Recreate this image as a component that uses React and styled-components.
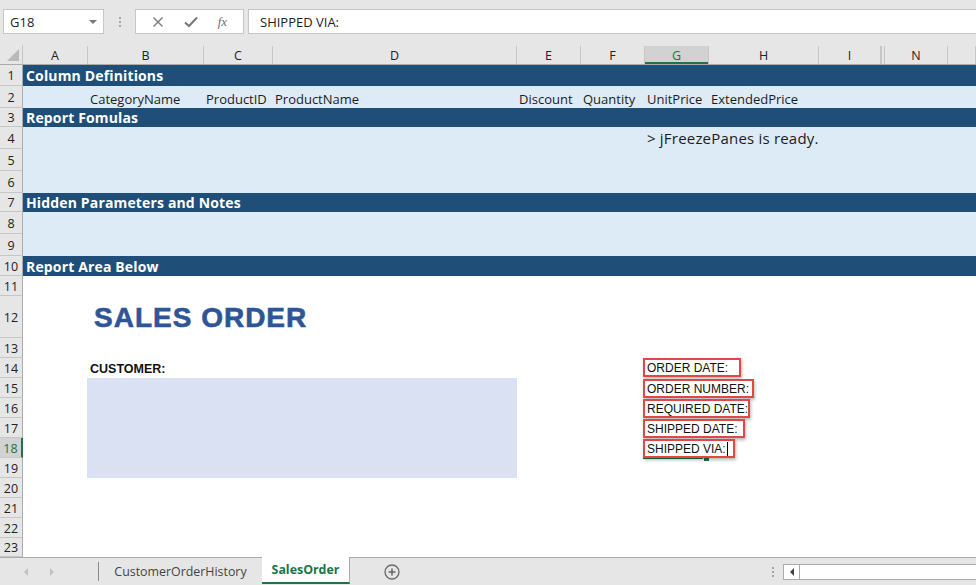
import React from "react";
import styled, { createGlobalStyle } from "styled-components";

const GlobalStyle = createGlobalStyle`
  html, body {
    margin: 0;
    padding: 0;
  }
  body {
    width: 976px;
    height: 585px;
    overflow: hidden;
    background: #ffffff;
    font-family: "Open Sans", "Liberation Sans", sans-serif;
  }
`;

const COLS = [
  { id: "A", w: 65 },
  { id: "B", w: 116 },
  { id: "C", w: 69 },
  { id: "D", w: 244 },
  { id: "E", w: 64 },
  { id: "F", w: 64 },
  { id: "G", w: 64, active: true },
  { id: "H", w: 110 },
  { id: "I", w: 62 },
  { id: "", w: 4, hidden: true },
  { id: "N", w: 63 },
  { id: "", w: 0 },
];

const TEMPLATE = COLS.map((c, i) => (i === COLS.length - 1 ? "1fr" : c.w + "px")).join(" ");

const ROWS = [
  { n: 1, h: 21, kind: "band", cells: [{ col: 1, pad: 3, text: "Column Definitions" }] },
  {
    n: 2,
    h: 22,
    kind: "light",
    cells: [
      { col: 2, pad: 2, text: "CategoryName" },
      { col: 3, pad: 2, text: "ProductID" },
      { col: 4, pad: 2, text: "ProductName" },
      { col: 5, pad: 2, text: "Discount" },
      { col: 6, pad: 2, text: "Quantity" },
      { col: 7, pad: 2, text: "UnitPrice" },
      { col: 8, pad: 2, text: "ExtendedPrice" },
    ],
  },
  { n: 3, h: 19, kind: "band", cells: [{ col: 1, pad: 3, text: "Report Fomulas" }] },
  { n: 4, h: 22, kind: "light", cells: [{ col: 7, pad: 2, text: "> jFreezePanes is ready.", variant: "note" }] },
  { n: 5, h: 22, kind: "light", cells: [] },
  { n: 6, h: 22, kind: "light", cells: [] },
  { n: 7, h: 19, kind: "band", cells: [{ col: 1, pad: 3, text: "Hidden Parameters and Notes" }] },
  { n: 8, h: 22, kind: "light", cells: [] },
  { n: 9, h: 22, kind: "light", cells: [] },
  { n: 10, h: 20, kind: "band", cells: [{ col: 1, pad: 3, text: "Report Area Below" }] },
  { n: 11, h: 20, kind: "plain", cells: [] },
  { n: 12, h: 42, kind: "plain", cells: [{ col: 2, pad: 6, text: "SALES ORDER", variant: "title" }] },
  { n: 13, h: 20, kind: "plain", cells: [] },
  {
    n: 14,
    h: 20,
    kind: "plain",
    cells: [
      { col: 2, pad: 2, text: "CUSTOMER:", variant: "label" },
      { col: 7, field: "ORDER DATE:", w: 98 },
    ],
  },
  { n: 15, h: 20, kind: "plain", fill: true, cells: [{ col: 7, field: "ORDER NUMBER:", w: 111, top: 1 }] },
  { n: 16, h: 20, kind: "plain", fill: true, cells: [{ col: 7, field: "REQUIRED DATE:", w: 107, top: 1 }] },
  { n: 17, h: 20, kind: "plain", fill: true, cells: [{ col: 7, field: "SHIPPED DATE:", w: 102, top: 1 }] },
  {
    n: 18,
    h: 20,
    kind: "plain",
    fill: true,
    active: true,
    cells: [{ col: 7, field: "SHIPPED VIA:", w: 92, top: 1, selected: true }],
  },
  { n: 19, h: 20, kind: "plain", fill: true, cells: [] },
  { n: 20, h: 20, kind: "plain", cells: [] },
  { n: 21, h: 20, kind: "plain", cells: [] },
  { n: 22, h: 20, kind: "plain", cells: [] },
  { n: 23, h: 19, kind: "plain", cells: [] },
];

/* ---------- formula bar ---------- */

const FormulaBar = styled.div`
  height: 45px;
  background: #e6e6e6;
  display: flex;
  align-items: flex-start;
  padding: 9px 0 0 3px;
  box-sizing: border-box;
`;

const NameBox = styled.div`
  width: 101px;
  height: 25px;
  box-sizing: border-box;
  background: #fff;
  border: 1px solid #c6c6c6;
  display: flex;
  align-items: center;
  justify-content: space-between;
  padding: 0 6px 0 6px;
  font-size: 13px;
  color: #222;
`;

const DropArrow = styled.span`
  width: 0;
  height: 0;
  border-left: 4px solid transparent;
  border-right: 4px solid transparent;
  border-top: 4px solid #777;
`;

const Grip = styled.div`
  width: 31px;
  height: 25px;
  display: flex;
  flex-direction: column;
  align-items: center;
  justify-content: center;
  gap: 2px;

  span {
    width: 2px;
    height: 2px;
    background: #a6a6a6;
  }
`;

const FxBox = styled.div`
  width: 109px;
  height: 25px;
  box-sizing: border-box;
  background: #fff;
  border: 1px solid #c6c6c6;
  display: flex;
  align-items: center;
  justify-content: space-around;
  padding: 0 6px;
  color: #6e6e6e;
`;

const FxLabel = styled.span`
  font-family: "Liberation Serif", serif;
  font-style: italic;
  font-size: 13px;
  color: #707070;
`;

const FormulaInput = styled.div`
  flex: 1;
  height: 25px;
  margin-left: 4px;
  box-sizing: border-box;
  background: #fff;
  border: 1px solid #c6c6c6;
  border-right: none;
  display: flex;
  align-items: center;
  padding-left: 11px;
  font-size: 13px;
  color: #222;
`;

/* ---------- column headers ---------- */

const HeaderRow = styled.div`
  display: flex;
  height: 20px;
  background: #e6e6e6;
  border-bottom: 1px solid #ababab;
  box-sizing: border-box;
`;

const Corner = styled.div`
  width: 23px;
  flex: none;
  position: relative;
  border-right: 1px solid #c6c6c6;
  box-sizing: border-box;

  &::after {
    content: "";
    position: absolute;
    right: 3px;
    bottom: 3px;
    border-left: 12px solid transparent;
    border-bottom: 12px solid #b9b9b9;
  }
`;

const ColGrid = styled.div`
  flex: 1;
  display: grid;
  grid-template-columns: ${(p) => p.$template};
  min-width: 0;
`;

const ColHead = styled.div`
  display: flex;
  align-items: center;
  justify-content: center;
  font-size: 12.5px;
  color: ${(p) => (p.$active ? "#217346" : "#222")};
  background: ${(p) => (p.$active ? "#d2d2d2" : "transparent")};
  border-right: 1px solid #c6c6c6;
  border-left: ${(p) => (p.$hidden ? "1px solid #c6c6c6" : "none")};
  box-shadow: ${(p) => (p.$active ? "inset 0 -2px 0 #217346" : "none")};
  box-sizing: border-box;
  margin-top: 1px;
`;

/* ---------- sheet rows ---------- */

const Row = styled.div`
  display: flex;
  height: ${(p) => p.$h}px;
`;

const RowHead = styled.div`
  width: 23px;
  flex: none;
  box-sizing: border-box;
  background: ${(p) => (p.$active ? "#d2d2d2" : "#e6e6e6")};
  color: ${(p) => (p.$active ? "#217346" : "#222")};
  border-bottom: 1px solid #c6c6c6;
  border-right: ${(p) => (p.$active ? "2px solid #217346" : "1px solid #ababab")};
  display: flex;
  align-items: center;
  justify-content: center;
  font-size: 12.5px;
  padding-top: 1px;
`;

const BG = {
  band: "#1f4e78",
  light: "#ddebf7",
  plain: "#ffffff",
};

const RowCells = styled(ColGrid)`
  background: ${(p) => BG[p.$kind]};
  position: relative;
`;

const Cell = styled.div`
  grid-column: ${(p) => p.$col} / span 1;
  grid-row: 1;
  display: flex;
  align-items: ${(p) => (p.$top !== undefined ? "flex-start" : "center")};
  padding-left: ${(p) => p.$pad || 0}px;
  padding-top: ${(p) => p.$top || 0}px;
  white-space: nowrap;
  min-width: 0;
  position: relative;
  z-index: 1;
`;

const BandText = styled.span`
  color: #ffffff;
  font-family: "Open Sans", sans-serif;
  font-weight: 700;
  font-size: 14px;
  letter-spacing: 0.15px;
`;

const PlainText = styled.span`
  color: #1c1c1c;
  font-family: "Open Sans", sans-serif;
  font-size: ${(p) => (p.$note ? "15px" : "13px")};
  letter-spacing: ${(p) => (p.$note ? "0.2px" : "0")};
  padding-top: ${(p) => (p.$note ? "0" : "3px")};
`;

const Title = styled.span`
  color: #2f5597;
  font-family: "Liberation Sans", Arial, sans-serif;
  font-weight: 700;
  font-size: 28px;
  letter-spacing: 1px;
  padding-top: 2px;
  -webkit-text-stroke: 0.6px #2f5597;
`;

const Label = styled.span`
  color: #111;
  font-family: "Liberation Sans", Arial, sans-serif;
  font-weight: 700;
  font-size: 12.5px;
  padding-top: 1px;
`;

const CustomerFill = styled.div`
  grid-column: 2 / span 4;
  grid-row: 1;
  margin-left: -1px;
  width: 430px;
  background: #d9e1f2;
`;

const FieldBox = styled.div`
  flex: none;
  width: ${(p) => p.$w}px;
  height: 19px;
  margin-left: -2px;
  box-sizing: border-box;
  border: 2px solid #e04848;
  box-shadow: 1px 2px 3px rgba(0, 0, 0, 0.28);
  display: flex;
  align-items: center;
  padding-left: 2px;
  font-family: "Liberation Sans", Arial, sans-serif;
  font-size: 12px;
  color: #111;
  background: #fff;
`;

const Caret = styled.span`
  display: inline-block;
  width: 1px;
  height: 14px;
  background: #000;
  margin-left: 1px;
`;

const SelectionEdge = styled.div`
  position: absolute;
  left: -2px;
  bottom: -1px;
  width: 62px;
  height: 2px;
  background: #217346;
  z-index: -1;

  &::after {
    content: "";
    position: absolute;
    right: -5px;
    top: -2px;
    width: 5px;
    height: 5px;
    background: #217346;
    border: 1px solid #fff;
  }
`;

/* ---------- sheet tabs ---------- */

const TabBar = styled.div`
  height: 28px;
  box-sizing: border-box;
  background: #e6e6e6;
  border-top: 1px solid #ababab;
  display: flex;
  align-items: stretch;
  font-size: 12.4px;
`;

const NavArrows = styled.div`
  width: 99px;
  display: flex;
  align-items: center;
  padding-left: 24px;
  gap: 22px;
  box-sizing: border-box;
  border-right: 1px solid #8c8c8c;
  margin: 4px 0 4px;
`;

const NavArrow = styled.span`
  width: 0;
  height: 0;
  border-top: 4px solid transparent;
  border-bottom: 4px solid transparent;
  ${(p) => (p.$dir === "left" ? "border-right: 4px solid #c2c2c2;" : "border-left: 4px solid #c2c2c2;")}
`;

const Tab = styled.div`
  display: flex;
  align-items: center;
  justify-content: center;
  width: ${(p) => p.$w}px;
  margin-top: -1px;
  color: ${(p) => (p.$active ? "#217346" : "#444")};
  font-weight: ${(p) => (p.$active ? 700 : 400)};
  background: ${(p) => (p.$active ? "#ffffff" : "transparent")};
  border-bottom: ${(p) => (p.$active ? "2px solid #217346" : "none")};
  border-right: ${(p) => (p.$active ? "1px solid #ababab" : "none")};
  box-sizing: border-box;
  margin-bottom: ${(p) => (p.$active ? "1px" : "0")};
`;

const AddSheet = styled.div`
  width: 84px;
  display: flex;
  align-items: center;
  justify-content: center;
`;

const Spacer = styled.div`
  flex: 1;
`;

const TabGrip = styled(Grip)`
  width: 20px;
  height: auto;
  align-self: center;
`;

const HScroll = styled.div`
  width: 193px;
  height: 16px;
  align-self: center;
  margin-top: 1px;
  box-sizing: border-box;
  border: 1px solid #ababab;
  border-right: none;
  background: #fff;
  display: flex;
`;

const ScrollBtn = styled.div`
  width: 15px;
  border-right: 1px solid #ababab;
  display: flex;
  align-items: center;
  justify-content: center;

  &::before {
    content: "";
    border-top: 4px solid transparent;
    border-bottom: 4px solid transparent;
    border-right: 4px solid #444;
  }
`;

const Sheet = styled.div`
  display: flex;
  flex-direction: column;
`;

function SheetCell({ c, kind }) {
  if (c.field) {
    return (
      <Cell $col={c.col} $top={c.top || 0}>
        <FieldBox $w={c.w}>
          {c.field}
          {c.selected && <Caret />}
        </FieldBox>
        {c.selected && <SelectionEdge />}
      </Cell>
    );
  }
  let content;
  if (kind === "band") content = <BandText>{c.text}</BandText>;
  else if (c.variant === "title") content = <Title>{c.text}</Title>;
  else if (c.variant === "label") content = <Label>{c.text}</Label>;
  else content = <PlainText $note={c.variant === "note"}>{c.text}</PlainText>;
  return (
    <Cell $col={c.col} $pad={c.pad}>
      {content}
    </Cell>
  );
}

export default function App() {
  return (
    <>
      <GlobalStyle />
      <FormulaBar>
        <NameBox>
          G18
          <DropArrow />
        </NameBox>
        <Grip>
          <span />
          <span />
          <span />
        </Grip>
        <FxBox>
          <svg width="12" height="12" viewBox="0 0 12 12">
            <path d="M1.5 1.5 L10.5 10.5 M10.5 1.5 L1.5 10.5" stroke="#777" strokeWidth="1.4" fill="none" />
          </svg>
          <svg width="14" height="12" viewBox="0 0 14 12">
            <path d="M1 6.5 L5 10 L13 1.5" stroke="#777" strokeWidth="2" fill="none" />
          </svg>
          <FxLabel>fx</FxLabel>
        </FxBox>
        <FormulaInput>SHIPPED VIA:</FormulaInput>
      </FormulaBar>

      <HeaderRow>
        <Corner />
        <ColGrid $template={TEMPLATE}>
          {COLS.map((c, i) => (
            <ColHead key={i} $active={c.active} $hidden={c.hidden}>
              {c.id}
            </ColHead>
          ))}
        </ColGrid>
      </HeaderRow>

      <Sheet>
        {ROWS.map((r) => (
          <Row key={r.n} $h={r.h}>
            <RowHead $active={r.active}>{r.n}</RowHead>
            <RowCells $template={TEMPLATE} $kind={r.kind}>
              {r.fill && <CustomerFill />}
              {r.cells.map((c, i) => (
                <SheetCell key={i} c={c} kind={r.kind} />
              ))}
            </RowCells>
          </Row>
        ))}
      </Sheet>

      <TabBar>
        <NavArrows>
          <NavArrow $dir="left" />
          <NavArrow $dir="right" />
        </NavArrows>
        <Tab $w={163}>CustomerOrderHistory</Tab>
        <Tab $w={88} $active>
          SalesOrder
        </Tab>
        <AddSheet>
          <svg width="16" height="16" viewBox="0 0 16 16">
            <circle cx="8" cy="8" r="7" stroke="#6a6a6a" strokeWidth="1.3" fill="none" />
            <path d="M8 4.5 V11.5 M4.5 8 H11.5" stroke="#6a6a6a" strokeWidth="1.6" />
          </svg>
        </AddSheet>
        <Spacer />
        <TabGrip>
          <span />
          <span />
          <span />
        </TabGrip>
        <HScroll>
          <ScrollBtn />
        </HScroll>
      </TabBar>
    </>
  );
}
